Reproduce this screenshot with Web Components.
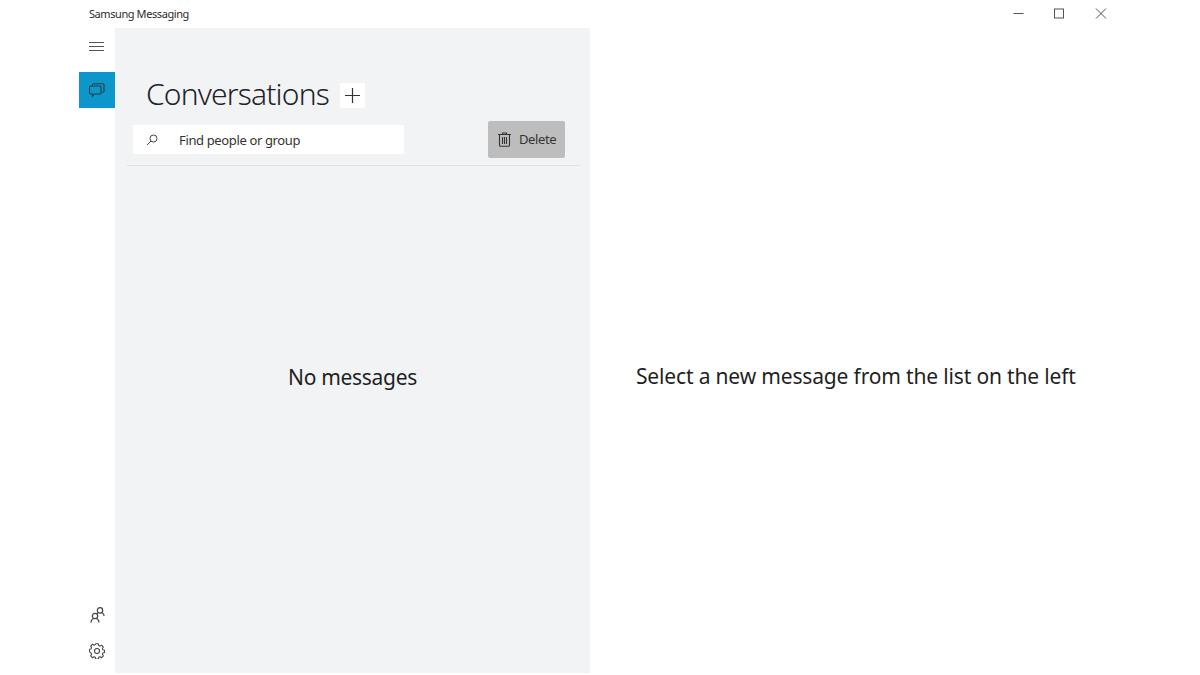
<!DOCTYPE html>
<html>
<head>
<meta charset="utf-8">
<title>Samsung Messaging</title>
<style>
html, body { margin: 0; height: 100%; background: #fff; }
body { font-family: "Noto Sans", "Open Sans", sans-serif; color: #1f1f1f; overflow: hidden; }
</style>
</head>
<body>
<app-window>
	<title-bar slot="top">Samsung Messaging</title-bar>
	<side-rail slot="rail"></side-rail>
	<list-pane slot="list"></list-pane>
	<detail-pane slot="detail">Select a new message from the list on the left</detail-pane>
</app-window>

<script>
// Base class, every element just stamps its markup into an open shadow root
class ShadowBase extends HTMLElement {
	constructor() {
		super();
		this.shadow = this.attachShadow({ mode: 'open' });
		this.shadow.innerHTML = this.markup();
	}
}

class AppWindow extends ShadowBase {
	markup() {
		return `
			<style>
				:host { display: block; height: 673px; padding-left: 79px; }
				.wrap { display: flex; flex-direction: column; height: 100%; }
				.main { display: flex; flex: 1; min-height: 0; }
			</style>
			<div class="wrap">
				<slot name="top"></slot>
				<div class="main">
					<slot name="rail"></slot>
					<slot name="list"></slot>
					<slot name="detail"></slot>
				</div>
			</div>
		`;
	}
}

class TitleBar extends ShadowBase {
	markup() {
		return `
			<style>
				:host { display: flex; align-items: center; height: 28px; flex: none; padding-left: 10px; }
				.name { font-size: 11px; letter-spacing: -0.42px; color: #2b2b2b; flex: 1; padding-bottom: 2px; }
				.controls { display: flex; margin-right: 78px; }
				.controls svg { width: 42px; height: 28px; display: block; }
			</style>
			<span class="name"><slot></slot></span>
			<div class="controls">
				<svg viewBox="0 0 42 28"><path d="M17.500 13.500h10" stroke="#555" fill="none"/></svg>
				<svg viewBox="0 0 42 28"><rect x="16.500" y="9" width="9" height="9" stroke="#555" fill="none"/></svg>
				<svg viewBox="0 0 42 28"><path d="M16 8.500l10 10M26 8.500l-10 10" stroke="#555" fill="none"/></svg>
			</div>
		`;
	}
}

class SideRail extends ShadowBase {
	markup() {
		return `
			<style>
				:host { display: flex; flex-direction: column; width: 36px; flex: none; }
				.item { width: 36px; height: 36px; display: flex; align-items: center; justify-content: center; }
				.item svg { display: block; }
				.menu { margin-top: 1px; }
				.menu svg { margin-right: 1px; }
				.active { background: #0d96c9; margin-top: 7px; }
				.spacer { flex: 1; }
				.gear { margin-bottom: 4px; }
			</style>
			<div class="item menu">
				<svg width="15" height="12" viewBox="0 0 15 12" fill="none" stroke="#555"><path d="M0 1.500h15M0 5.500h15M0 9.500h15"/></svg>
			</div>
			<div class="item active">
				<svg width="16" height="15" viewBox="0 0 16 15" fill="none" stroke="#2d3a40" stroke-width="1.100">
					<path d="M3.500 2.800V2a1.200 1.200 0 0 1 1.200-1.200h9.100A1.200 1.200 0 0 1 15 2v6a1.200 1.200 0 0 1-1.200 1.200h-1.300"/>
					<path d="M1.700 3h9.100A1.200 1.200 0 0 1 12 4.200v5.600a1.200 1.200 0 0 1-1.200 1.200H5.500l-2 2.200V11H1.700A1.200 1.200 0 0 1 .5 9.800V4.200A1.200 1.200 0 0 1 1.700 3z"/>
				</svg>
			</div>
			<div class="spacer"></div>
			<div class="item people">
				<svg width="15" height="16" viewBox="0 0 15 16" fill="none" stroke="#444" stroke-width="1.200">
					<circle cx="5" cy="9" r="2.700"/>
					<path d="M1 15.500c0-1.800 1-3.300 2.600-4M6.400 11.500c1.600.7 2.600 2.200 2.600 4"/>
					<circle cx="10" cy="3.400" r="2.700"/>
					<path d="M8 5.800c-.5.300-.9.600-1.200 1M12 5.800c1.200.6 2 1.700 2.100 3.200"/>
				</svg>
			</div>
			<div class="item gear">
				<svg width="16" height="16" viewBox="0 0 16 16" fill="none" stroke="#444" stroke-width="1.100" stroke-linejoin="round">
					<circle cx="8" cy="8" r="2.500"/>
					<path d="M6.600 1h2.800l.4 1.900 1.300.6 1.700-1 1.900 2-1 1.600.5 1.300 1.800.5v2.400l-1.800.5-.5 1.300 1 1.600-1.900 2-1.700-1-1.300.6-.4 1.700H6.600l-.4-1.700-1.300-.6-1.700 1-1.900-2 1-1.600-.5-1.300L0 9.300V6.900l1.800-.5.500-1.300-1-1.600 1.900-2 1.700 1 1.300-.6z" transform="translate(.4 -.2) scale(.95)"/>
				</svg>
			</div>
		`;
	}
}

class SearchBox extends ShadowBase {
	markup() {
		return `
			<style>
				:host { display: flex; align-items: center; width: 271px; height: 29px; background: #fff; font-size: 13px; color: #333; letter-spacing: -0.36px; }
				svg { margin: 0 21px 0 13px; display: block; flex: none; }
			</style>
			<svg width="12" height="12" viewBox="0 0 12 12" fill="none" stroke="#444"><circle cx="7.500" cy="4.500" r="3.500"/><path d="M5 7L1 11"/></svg>
			<slot></slot>
		`;
	}
}

class DeleteButton extends ShadowBase {
	markup() {
		return `
			<style>
				:host { display: flex; align-items: center; width: 77px; height: 37px; background: #bdbdbd; border-radius: 2px; font-size: 13px; color: #333; letter-spacing: -0.4px; box-sizing: border-box; padding-left: 10px; }
				svg { margin-right: 8px; display: block; }
				span { padding-bottom: 2px; }
			</style>
			<svg width="13" height="15" viewBox="0 0 13 15" fill="none" stroke="#333" stroke-width="1.100">
				<path d="M0 2.500h13M4.500 2.500V1h4v1.500M1.500 2.500v10.800a1 1 0 0 0 1 1h8a1 1 0 0 0 1-1V2.500M4.500 5v7M6.500 5v7M8.500 5v7"/>
			</svg>
			<span><slot></slot></span>
		`;
	}
}

class ListPane extends ShadowBase {
	markup() {
		return `
			<style>
				:host { display: flex; flex-direction: column; width: 475px; flex: none; background: #f2f3f5; box-sizing: border-box; padding-top: 46px; }
				.head { display: flex; align-items: center; padding-left: 31px; height: 44px; }
				h1 { margin: 0 0 4px; font-size: 30px; font-weight: 300; color: #1f2326; letter-spacing: -0.83px; line-height: 44px; }
				.add { width: 25px; height: 25px; background: #fff; margin-left: 11px; display: flex; align-items: center; justify-content: center; border-radius: 2px; margin-top: -1px; }
				.add svg { display: block; }
				.tools { display: flex; align-items: center; justify-content: space-between; margin: 3px 25px 0 18px; height: 37px; }
				hr { border: 0; border-top: 1px solid #dfe0e2; margin: 7px 10px 0 12px; }
				.empty { flex: 1; display: flex; align-items: center; justify-content: center; font-size: 21px; color: #1f1f1f; padding-bottom: 85px; letter-spacing: -0.3px; }
			</style>
			<div class="head">
				<h1>Conversations</h1>
				<div class="add">
					<svg width="15" height="15" viewBox="0 0 15 15" fill="none" stroke="#333" stroke-width="1.200"><path d="M7.500 0v15M0 7.500h15"/></svg>
				</div>
			</div>
			<div class="tools">
				<search-box>Find people or group</search-box>
				<delete-button>Delete</delete-button>
			</div>
			<hr>
			<div class="empty">No messages</div>
		`;
	}
}

class DetailPane extends ShadowBase {
	markup() {
		return `
			<style>
				:host { display: flex; flex: 1; align-items: center; padding: 50px 0 0 46px; font-size: 21px; color: #1f1f1f; letter-spacing: -0.16px; }
			</style>
			<span><slot></slot></span>
		`;
	}
}

customElements.define('app-window', AppWindow);
customElements.define('title-bar', TitleBar);
customElements.define('side-rail', SideRail);
customElements.define('search-box', SearchBox);
customElements.define('delete-button', DeleteButton);
customElements.define('list-pane', ListPane);
customElements.define('detail-pane', DetailPane);
</script>
</body>
</html>
